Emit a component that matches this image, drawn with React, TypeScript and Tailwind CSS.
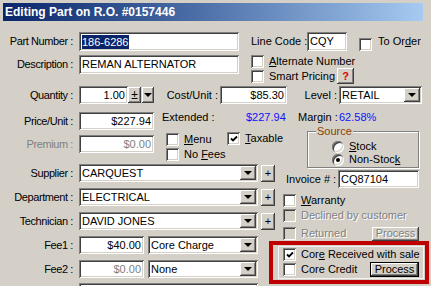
import React from "react";

const sunken =
  "shadow-[inset_1px_1px_0_#808080,inset_-1px_-1px_0_#ffffff,inset_2px_2px_0_#404040,inset_-2px_-2px_0_#d4d0c8]";
const raised =
  "bg-[#d4d0c8] shadow-[inset_-1px_-1px_0_#404040,inset_1px_1px_0_#ffffff,inset_-2px_-2px_0_#808080]";

function Label({ children, muted = false }: { children: React.ReactNode; muted?: boolean }) {
  return (
    <span
      className={`w-[70px] shrink-0 text-right whitespace-nowrap tracking-[-0.4px] ${muted ? "text-[#808080]" : ""}`}
    >
      {children}
    </span>
  );
}

function Field({
  className = "",
  children,
  right = false,
  muted = false,
}: {
  className?: string;
  children?: React.ReactNode;
  right?: boolean;
  muted?: boolean;
}) {
  return (
    <div
      className={`${sunken} bg-white shrink-0 flex items-center whitespace-nowrap overflow-hidden ${
        right ? "justify-end pr-[3px]" : "pl-[3px]"
      } ${muted ? "text-[#808080]" : ""} ${className}`}
    >
      {children}
    </div>
  );
}

function Arrow() {
  return (
    <svg width="8" height="4" viewBox="0 0 8 4">
      <path d="M0 0h8L4 4z" fill="#000" />
    </svg>
  );
}

function Btn({ className = "", children }: { className?: string; children?: React.ReactNode }) {
  return <div className={`${raised} shrink-0 flex items-center justify-center ${className}`}>{children}</div>;
}

function Combo({ className = "", text }: { className?: string; text: string }) {
  return (
    <div className={`${sunken} bg-white shrink-0 h-[18px] flex items-center p-[2px] ${className}`}>
      <span className="flex-1 pl-[1px] whitespace-nowrap overflow-hidden">{text}</span>
      <Btn className="w-[16px] h-[14px]">
        <Arrow />
      </Btn>
    </div>
  );
}

function Check({
  checked = false,
  disabled = false,
  className = "",
}: {
  checked?: boolean;
  disabled?: boolean;
  className?: string;
}) {
  return (
    <div
      className={`w-[13px] h-[13px] shrink-0 flex items-center justify-center ${
        disabled ? "bg-[#d4d0c8]" : "bg-white"
      } ${sunken} ${className}`}
    >
      {checked && (
        <svg width="8" height="8" viewBox="0 0 8 8">
          <path d="M1 3.5 L3 5.5 L7 1.5" stroke="#000" strokeWidth="1.8" fill="none" />
        </svg>
      )}
    </div>
  );
}

function Radio({ checked = false }: { checked?: boolean }) {
  return (
    <div className={`w-[12px] h-[12px] rounded-full bg-white ${sunken} flex items-center justify-center shrink-0`}>
      {checked && <div className="w-[4px] h-[4px] rounded-full bg-black" />}
    </div>
  );
}

export default function App() {
  return (
    <div className="w-[431px] h-[286px] overflow-hidden bg-[#d4d0c8] pt-[3px] pl-[3px] font-['Liberation_Sans',Arial,sans-serif] text-[11px] leading-[13px] text-black">
      {/* Title bar */}
      <div className="w-[420px] h-[18px] flex items-center pl-[2px] bg-linear-to-r from-[#0a246a] to-[#a6caf0] text-white font-bold text-[12px]">
        Editing Part on R.O. #0157446
      </div>

      {/* Part number / line code */}
      <div className="flex items-center h-[19px] mt-[11px]">
        <Label>Part Number :</Label>
        <Field className="ml-[6px] w-[160px] h-[19px]">
          <span className="bg-[#0a246a] text-white leading-[14px]">186-6286</span>
        </Field>
        <span className="ml-[12px] w-[53px] whitespace-nowrap">Line Code :</span>
        <Field className="ml-[3px] w-[40px] h-[19px]">CQY</Field>
        <Check className="ml-[12px] self-start mt-[6px]" />
        <span className="ml-[6px] whitespace-nowrap">
          To Or<span className="underline">d</span>er
        </span>
      </div>

      {/* Description + flags */}
      <div className="flex items-start mt-[4px]">
        <div className="flex items-center h-[19px]">
          <Label>Description :</Label>
          <Field className="ml-[6px] w-[160px] h-[19px]">REMAN ALTERNATOR</Field>
        </div>
        <div className="ml-[12px] flex flex-col">
          <div className="flex items-center h-[13px]">
            <Check />
            <span className="ml-[5px] whitespace-nowrap">
              <span className="underline">A</span>lternate Number
            </span>
          </div>
          <div className="flex items-center h-[16px]">
            <Check />
            <span className="ml-[5px] whitespace-nowrap">Smart Pricing</span>
            <Btn className="ml-[2px] w-[17px] h-[16px] text-[#e00000] font-bold">?</Btn>
          </div>
        </div>
      </div>

      {/* Quantity / cost / level */}
      <div className="flex items-center h-[18px] mt-[2px]">
        <Label>Quantity :</Label>
        <Field className="ml-[6px] w-[49px] h-[18px]" right>
          1.00
        </Field>
        <Btn className="w-[13px] h-[16px] text-[12px]">±</Btn>
        <Btn className="ml-[1px] w-[12px] h-[16px]">
          <Arrow />
        </Btn>
        <span className="w-[64px] text-right whitespace-nowrap">Cost/Unit :</span>
        <Field className="ml-[2px] w-[67px] h-[18px]" right>
          $85.30
        </Field>
        <span className="w-[50px] text-right whitespace-nowrap">Level :</span>
        <Combo className="ml-[2px] w-[83px]" text="RETAIL" />
      </div>

      {/* Price / extended / margin */}
      <div className="flex items-start h-[18px] mt-[8px]">
        <div className="flex items-center h-[18px]">
          <Label>Price/Unit :</Label>
          <Field className="ml-[6px] w-[75px] h-[18px]" right>
            $227.94
          </Field>
        </div>
        <span className="ml-[8px] w-[84px] -mt-[1px] whitespace-nowrap">Extended :</span>
        <span className="w-[52px] -mt-[1px] text-[#1010ff]">$227.94</span>
        <span className="w-[41px] -mt-[1px] whitespace-nowrap">Margin :</span>
        <span className="-mt-[1px] text-[#1010ff]">62.58%</span>
      </div>

      {/* Lower half */}
      <div className="flex mt-[1px]">
        {/* Left column */}
        <div className="w-[280px] shrink-0 flex flex-col">
          <div className="flex items-start h-[30px]">
            <div className="flex items-center h-[18px] mt-[4px]">
              <Label muted>Premium :</Label>
              <Field className="ml-[6px] w-[75px] h-[18px]" right muted>
                $0.00
              </Field>
            </div>
            <div className="ml-[12px] w-[66px] mt-[2px] flex flex-col gap-[2px]">
              <div className="flex items-center h-[13px]">
                <Check />
                <span className="ml-[5px]">
                  <span className="underline">M</span>enu
                </span>
              </div>
              <div className="flex items-center h-[13px]">
                <Check />
                <span className="ml-[5px] whitespace-nowrap">
                  No <span className="underline">F</span>ees
                </span>
              </div>
            </div>
            <div className="flex items-center h-[13px] mt-[1px]">
              <Check checked />
              <span className="ml-[5px]">
                <span className="underline">T</span>axable
              </span>
            </div>
          </div>

          <div className="flex items-center h-[18px] mt-[3px]">
            <Label>Supplier :</Label>
            <Combo className="ml-[6px] w-[179px]" text="CARQUEST" />
            <Btn className="ml-[3px] w-[14px] h-[17px]">+</Btn>
          </div>
          <div className="flex items-center h-[18px] mt-[6px]">
            <Label>Department :</Label>
            <Combo className="ml-[6px] w-[179px]" text="ELECTRICAL" />
            <Btn className="ml-[3px] w-[14px] h-[17px]">+</Btn>
          </div>
          <div className="flex items-center h-[18px] mt-[6px]">
            <Label>Technician :</Label>
            <Combo className="ml-[6px] w-[179px]" text="DAVID JONES" />
            <Btn className="ml-[3px] w-[14px] h-[17px]">+</Btn>
          </div>
          <div className="flex items-center h-[18px] mt-[6px]">
            <Label>Fee1 :</Label>
            <Field className="ml-[6px] w-[65px] h-[18px]" right>
              $40.00
            </Field>
            <Combo className="ml-[4px] w-[110px]" text="Core Charge" />
          </div>
          <div className="flex items-center h-[18px] mt-[6px]">
            <Label>Fee2 :</Label>
            <Field className="ml-[6px] w-[65px] h-[18px]" right muted>
              $0.00
            </Field>
            <Combo className="ml-[4px] w-[110px]" text="None" />
          </div>
          <div className="flex items-center h-[18px] mt-[5px]">
            <Label> </Label>
            <Field className="ml-[6px] w-[179px] h-[18px]" />
          </div>
        </div>

        {/* Right column */}
        <div className="w-[141px] shrink-0 flex flex-col">
          <div className="relative ml-[24px] w-[112px] h-[37px] border border-[#808080] shadow-[inset_1px_1px_0_#ffffff,1px_1px_0_#ffffff] pl-[24px] pt-[8px]">
            <span className="absolute left-[8px] -top-[7px] px-[1px] bg-[#d4d0c8] text-[#8b4000]">Source</span>
            <div className="flex items-center h-[13px]">
              <Radio />
              <span className="ml-[5px]">
                <span className="underline">S</span>tock
              </span>
            </div>
            <div className="flex items-center h-[13px]">
              <Radio checked />
              <span className="ml-[5px] whitespace-nowrap">
                Non-Stoc<span className="underline">k</span>
              </span>
            </div>
          </div>

          <div className="flex items-center h-[18px] mt-[2px]">
            <span className="ml-[3px] w-[52px] whitespace-nowrap">Invoice # :</span>
            <Field className="w-[81px] h-[18px]">CQ87104</Field>
          </div>

          <div className="flex items-center h-[13px] mt-[6px]">
            <Check />
            <span className="ml-[5px]">
              <span className="underline">W</span>arranty
            </span>
          </div>
          <div className="flex items-center h-[13px] mt-[2px]">
            <Check disabled />
            <span className="ml-[5px] whitespace-nowrap text-[#808080] [text-shadow:1px_1px_0_#ffffff]">
              Declined by customer
            </span>
          </div>
          <div className="flex items-center h-[15px] mt-[4px]">
            <Check disabled />
            <span className="ml-[5px] text-[#808080] [text-shadow:1px_1px_0_#ffffff]">Returned</span>
            <Btn className="ml-auto mr-[5px] w-[47px] h-[14px] text-[#808080] [text-shadow:1px_1px_0_#ffffff]">
              Process
            </Btn>
          </div>

          {/* Highlighted core section */}
          <div className="-ml-[14px] w-[160px] h-[43px] border-[4px] border-[#c00000]">
            <div className="ml-[5px] mt-[1px] w-[146px] h-[33px] border border-[#f4f4f4] pl-[4px] pt-[1px]">
              <div className="flex items-center h-[13px]">
                <Check checked />
                <span className="ml-[5px] whitespace-nowrap">
                  Cor<span className="underline">e</span> Received with sale
                </span>
              </div>
              <div className="flex items-center h-[15px] mt-[1px]">
                <Check />
                <span className="ml-[5px] whitespace-nowrap">Core Credit</span>
                <Btn className="ml-auto mr-[4px] w-[49px] h-[15px] border border-black">Process</Btn>
              </div>
            </div>
          </div>
        </div>
      </div>
    </div>
  );
}
